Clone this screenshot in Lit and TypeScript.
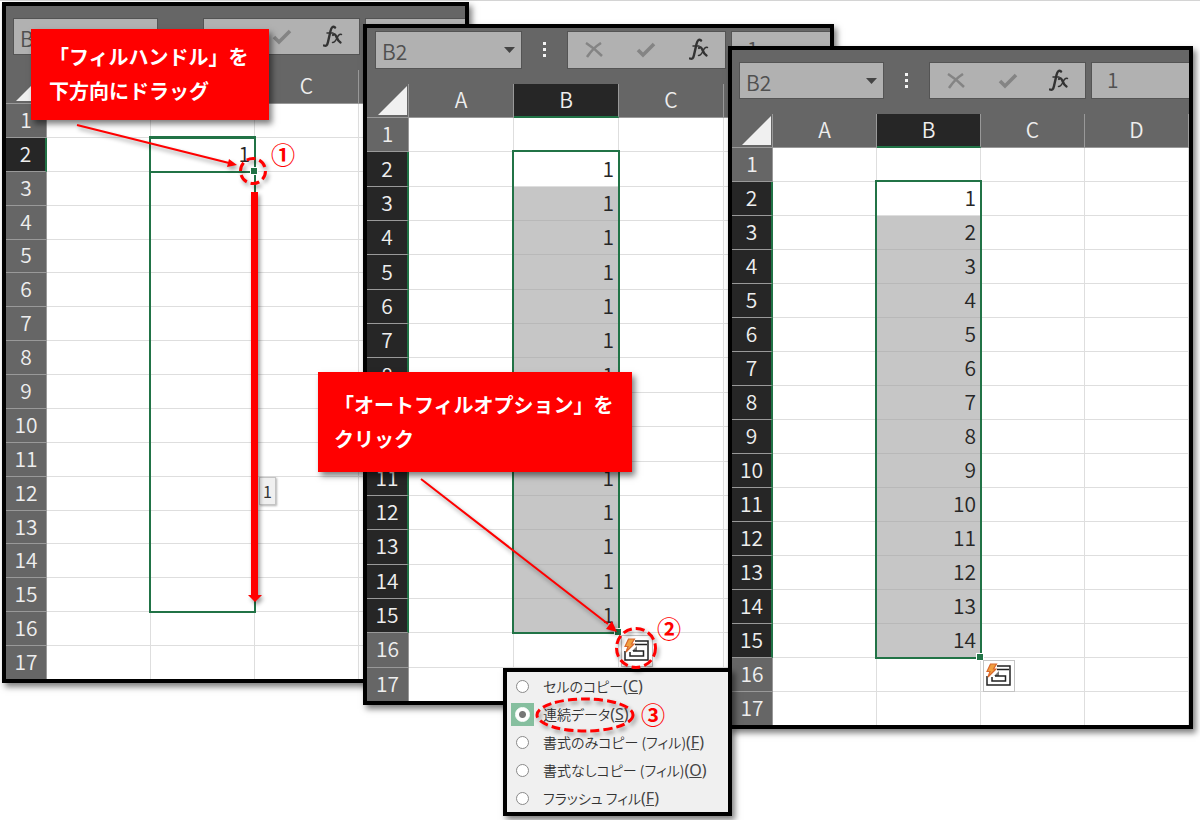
import { LitElement, html, svg, css, nothing } from "lit";
import { customElement, property } from "lit/decorators.js";
import { classMap } from "lit/directives/class-map.js";

const autofillIcon = svg`
  <path d="M12 4H25V23H2V14M12 7.500H24" fill="none" stroke="#222" stroke-width="1.500"/>
  <path d="M9 14L14 9V14Z" fill="#777"/>
  <path d="M10 14H20.500V19H7V15" fill="none" stroke="#222" stroke-width="1.500"/>
  <path d="M5.500 2H11.500L8.500 7H11L3 15L5 9.500H2Z" fill="#f0a040" stroke="#d9682c" stroke-width="1.200"/>`;

@customElement("sheet-window")
export class SheetWindow extends LitElement {
  @property({ type: Array }) columns: string[] = [];
  @property({ type: Array }) values: number[] = [];
  @property({ type: String }) mode = "filled";
  @property({ type: String }) formula = "";

  static styles = css`
    :host {
      --head: 41px;
      --col: 104px;
      --name: 145px;
      --bar-left: 7px;
      --bar-top: 12px;
      --bar: 37px;
      box-sizing: border-box;
      display: flex;
      flex-direction: column;
      border: 4px solid #000;
      background: #666;
      overflow: hidden;
      box-shadow: 3px 4px 6px rgba(0, 0, 0, 0.5);
      font-family: "Noto Sans CJK JP", sans-serif;
      font-weight: 350;
      font-size: 21px;
    }
    .bar {
      display: flex;
      flex: none;
      height: var(--bar);
      padding: var(--bar-top) 0 15px var(--bar-left);
    }
    .name,
    .tools,
    .formula {
      box-sizing: border-box;
      display: flex;
      align-items: center;
      background: #b1b1b1;
      border: 1px solid #545454;
      flex: none;
    }
    .name { width: var(--name); }
    input {
      box-sizing: border-box;
      border: 0;
      padding: 0;
      margin: 0;
      background: none;
      min-width: 0;
      flex: 1;
      height: 100%;
      font: inherit;
      color: #505050;
      outline: 0;
    }
    .name input { padding: 2px 0 0 6px; }
    button {
      border: 0;
      padding: 0;
      margin: 0;
      background: none;
      font: inherit;
      display: grid;
      place-items: center;
    }
    .drop { width: 24px; height: 100%; }
    .dots {
      width: 45px;
      display: grid;
      place-items: center;
      flex: none;
    }
    .tools {
      width: calc(var(--name) + 12px);
      justify-content: space-around;
    }
    .tools button { flex: 1; height: 100%; }
    .formula {
      flex: 1;
      margin-left: 5px;
      border-right: 0;
    }
    .formula input { padding: 0 0 4px 15px; }
    .sheet {
      position: relative;
      flex: 1;
      display: grid;
      min-height: 0;
      margin-bottom: -1px;
    }
    table {
      display: grid;
      grid-template-rows: 34px minmax(0, 1fr);
      min-height: 0;
      overflow: hidden;
    }
    thead, tbody { display: grid; min-height: 0; }
    tbody { grid-template-rows: repeat(17, minmax(0, 1fr)); background: #fff; }
    tr {
      display: grid;
      grid-template-columns: var(--head) repeat(var(--n), var(--col)) 1fr;
      min-height: 0;
    }
    th, td {
      box-sizing: border-box;
      padding: 0 0 3px;
      display: flex;
      align-items: center;
      justify-content: center;
      font-weight: 350;
      line-height: 30px;
      min-width: 0;
      min-height: 0;
    }
    th {
      color: #eee;
      border-right: 1px solid #999;
      border-bottom: 1px solid #999;
    }
    tbody th { background: #666; }
    thead th.on { background: #262626; border-bottom: 2px solid #217346; }
    tbody th.on { background: #262626; border-right: 2px solid #217346; }
    td {
      color: #262626;
      border-right: 1px solid #dedede;
      border-bottom: 1px solid #dedede;
      justify-content: flex-end;
      padding-right: 4px;
    }
    td.fill { background: #c6c6c6; border-bottom-color: #b8b8b8; }
    .corner { justify-content: flex-end; align-items: flex-end; padding: 0 1px 2px 0; }
    .range, .cell {
      position: absolute;
      box-sizing: border-box;
      left: calc(var(--head) + var(--col) - 2px);
      width: calc(var(--col) + 3px);
      top: calc(34px + (100% - 34px) / 17 - 2px);
      height: calc((100% - 34px) / 17 * 14 + 3px);
      border: 2px solid #217346;
      pointer-events: none;
    }
    .cell { height: calc((100% - 34px) / 17 + 3px); border-width: 3px 2px 2px; }
    .range::after, .cell::after {
      content: "";
      position: absolute;
      right: -3px;
      bottom: -3px;
      width: 6px;
      height: 6px;
      background: #217346;
      box-shadow: 0 0 0 1px #fff;
    }
    .range.drag::after { display: none; }
    .options {
      position: absolute;
      box-sizing: border-box;
      left: calc(var(--head) + var(--col) * 2 + 2px);
      top: calc(34px + (100% - 34px) / 17 * 15 + 2px);
      width: 32px;
      height: 32px;
      background: #fff;
      border: 1px solid #c4c4c4;
    }
  `;

  render() {
    const drag = this.mode === "drag";
    const rows = Array.from({ length: 17 }, (_, i) => i + 1);
    return html`
      <div class="bar">
        <div class="name">
          <input aria-label="名前ボックス" value="B2" />
          <button class="drop" aria-label="名前の一覧">
            <svg width="11" height="6"><path d="M0 0H11L5.500 6Z" fill="#444" /></svg>
          </button>
        </div>
        <div class="dots">
          <svg width="4" height="16" fill="#f4f4f4"><path d="M0 0h3v3H0zM0 6h3v3H0zM0 12h3v3H0z" /></svg>
        </div>
        <div class="tools">
          <button aria-label="キャンセル">
            <svg width="18" height="16" fill="none" stroke="#848484" stroke-width="2.500"><path d="M1 1Q9 6 17 14M16 1Q8 6 2 15" /></svg>
          </button>
          <button aria-label="入力">
            <svg width="20" height="16" fill="none" stroke="#848484" stroke-width="3.600"><path d="M2 8L7 13L18 2" /></svg>
          </button>
          <button aria-label="関数の挿入">
            <svg width="20" height="24" fill="none" stroke="#333" stroke-linecap="round">
              <path d="M12 2.500Q9 0 7.500 6L5 17Q4 22 1 20.500" stroke-width="2.400" />
              <path d="M4 8H10" stroke-width="1.500" />
              <path d="M10 10Q12 8 13.500 12T17.500 17.500" stroke-width="2.400" />
              <path d="M18.500 9.500Q16 8.500 14 13T9.500 17.500" stroke-width="1.500" />
            </svg>
          </button>
        </div>
        <div class="formula"><input aria-label="数式バー" .value=${this.formula} /></div>
      </div>
      <div class="sheet">
        <table style="--n:${this.columns.length}">
          <thead>
            <tr>
              <th class="corner"><svg width="29" height="29"><path d="M29 0V29H0Z" fill="#f0f0f0" /></svg></th>
              ${this.columns.map((c) => html`<th class=${classMap({ on: c === "B" })}>${c}</th>`)}
            </tr>
          </thead>
          <tbody>
            ${rows.map((r) => {
              const on = drag ? r === 2 : r > 1 && r < 16;
              return html`<tr>
                <th class=${classMap({ on })}>${r}</th>
                ${this.columns.map((c) => html`<td class=${classMap({ fill: c === "B" && !drag && r > 2 && r < 16 })}>${c === "B" ? this.values[r - 2] ?? nothing : nothing}</td>`)}
              </tr>`;
            })}
          </tbody>
        </table>
        <div class=${classMap({ range: true, drag })}></div>
        ${drag
          ? html`<div class="cell"></div>`
          : html`<button class="options" aria-label="オートフィル オプション"><svg width="28" height="28">${autofillIcon}</svg></button>`}
      </div>
    `;
  }
}

@customElement("app-root")
export class AppRoot extends LitElement {
  static styles = css`
    :host {
      display: block;
      position: relative;
      min-height: 820px;
      overflow: hidden;
      background: #fff;
      box-shadow: inset 0 1px #d4d4d4;
      font-family: "Noto Sans CJK JP", sans-serif;
    }
    sheet-window { position: absolute; }
    .first { left: 2px; top: 2px; width: 467px; height: 681px; }
    .second {
      left: 363px; top: 24px; width: 471px; height: 681px;
      --head: 42px; --col: 105px; --name: 147px; --bar-left: 8px; --bar-top: 3px; --bar: 38px;
    }
    .third { left: 728px; top: 46px; width: 465px; height: 683px; }
    .tip {
      position: absolute;
      left: 259px;
      top: 477px;
      box-sizing: border-box;
      padding: 0 3px;
      font-size: 16px;
      line-height: 26px;
      color: #333;
      background: #f0f0f0;
      border: 1px solid #c4c4c4;
      box-shadow: 1px 1px 2px rgba(0, 0, 0, 0.3);
    }
    .menu {
      position: absolute;
      left: 503px;
      top: 668px;
      width: 229px;
      box-sizing: border-box;
      margin: 0;
      border: 4px solid #000;
      background: #f0f0f0;
      box-shadow: 3px 4px 6px rgba(0, 0, 0, 0.5);
      font-size: 14px;
      font-weight: 350;
      color: #333;
      font-feature-settings: "palt";
    }
    .menu label {
      display: flex;
      align-items: center;
      gap: 9px;
      height: 28px;
      padding-left: 4px;
      line-height: 24px;
      white-space: nowrap;
    }
    .key { font-family: "Noto Sans", sans-serif; font-size: 16px; font-weight: 400; color: #444; }
    .mark { display: grid; place-items: center; width: 23px; height: 23px; }
    .mark:has(:checked) { background: #86bf9f; }
    .menu input {
      appearance: none;
      box-sizing: border-box;
      width: 13px;
      height: 13px;
      margin: 0;
      border: 1px solid #8a8a8a;
      border-radius: 50%;
      background: #fff;
    }
    .menu input:checked {
      width: 15px;
      height: 15px;
      border-color: #fff;
      background: radial-gradient(circle, #777 0 3px, #fff 4px);
    }
    .callout {
      position: absolute;
      box-sizing: border-box;
      margin: 0;
      background: #f00;
      color: #fff;
      font-size: 20px;
      font-weight: 700;
      line-height: 34px;
      white-space: nowrap;
      box-shadow: 3px 4px 6px rgba(0, 0, 0, 0.5);
    }
    .drag-note { left: 31px; top: 29px; padding: 11px 20px 12px 18px; }
    .click-note { left: 318px; top: 372px; padding: 16px 18px 16px 16px; }
    .marks { position: absolute; left: 0; top: 0; filter: drop-shadow(2px 3px 2px rgba(0, 0, 0, 0.4)); pointer-events: none; }
    .step {
      position: absolute;
      color: #f00;
      font-size: 24px;
      font-weight: 700;
      line-height: 24px;
    }
    .one { left: 271px; top: 142px; }
    .two { left: 657px; top: 616px; }
    .three { left: 641px; top: 702px; }
  `;

  private options = [
    ["セルのコピー", "C"],
    ["連続データ", "S"],
    ["書式のみコピー (フィル)", "F"],
    ["書式なしコピー (フィル)", "O"],
    ["フラッシュ フィル", "F"],
  ];

  render() {
    return html`
      <sheet-window class="first" mode="drag" .columns=${["A", "B", "C", "D"]} .values=${[1]} formula="1"></sheet-window>
      <div class="tip">1</div>
      <sheet-window class="second" .columns=${["A", "B", "C", "D"]} .values=${Array(14).fill(1)} formula="1"></sheet-window>
      <sheet-window class="third" .columns=${["A", "B", "C", "D"]} .values=${Array.from({ length: 14 }, (_, i) => i + 1)} formula="1"></sheet-window>
      <div class="menu" role="radiogroup" aria-label="オートフィル オプション">
        ${this.options.map(
          ([text, key], i) => html`<label><span class="mark"><input type="radio" name="fill" ?checked=${i === 1} /></span><span>${text}<span class="key">(<u>${key}</u>)</span></span></label>`
        )}
      </div>
      <p class="callout drag-note">「フィルハンドル」を<br />下方向にドラッグ</p>
      <p class="callout click-note">「オートフィルオプション」を<br />クリック</p>
      <svg class="marks" width="1200" height="820" fill="none" stroke="#f00">
        <path d="M77 125L229 163M421 479L608 624" stroke-width="2" />
        <path d="M237 165L227 167L229 159ZM617 632L606 629L612 621Z" fill="#f00" stroke="none" />
        <path d="M251 192H258V595H262L255 602L248 595H251Z" fill="#f00" stroke="none" />
        <circle cx="253" cy="171" r="12.500" stroke-width="3" stroke-dasharray="9 4" />
        <circle cx="636" cy="648" r="19.500" stroke-width="3" stroke-dasharray="9 4" />
        <ellipse cx="585" cy="715" rx="48" ry="16" stroke-width="3" stroke-dasharray="9 4" />
      </svg>
      <span class="step one">①</span>
      <span class="step two">②</span>
      <span class="step three">③</span>
    `;
  }
}
